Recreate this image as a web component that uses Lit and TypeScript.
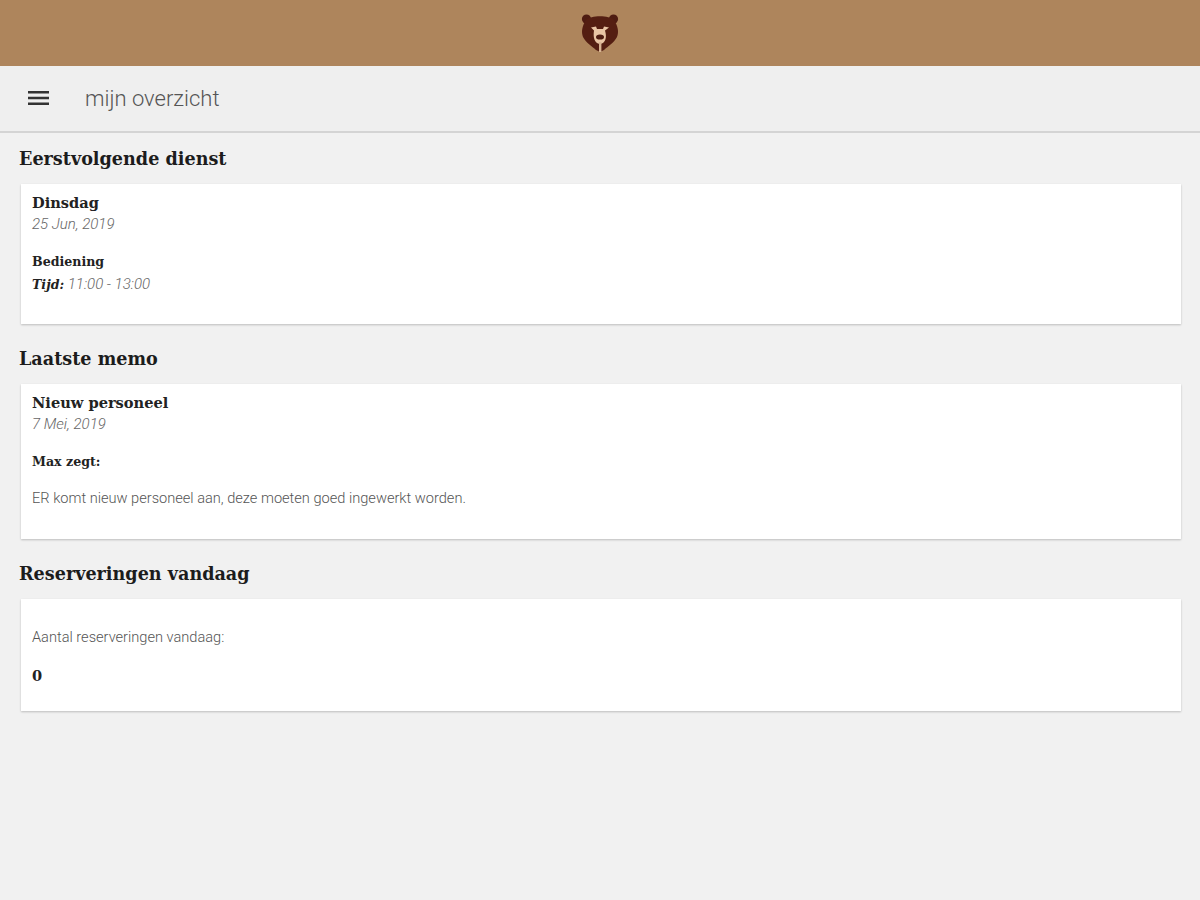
import { LitElement, html, css } from "lit";
import { customElement } from "lit/decorators.js";

@customElement("app-root")
export class AppRoot extends LitElement {
  static styles = css`
    :host { display: block; min-height: 900px; background: #f1f1f1; font-family: Roboto, sans-serif; color: #333; }
    .brand { height: 66px; background: #ae855c; display: flex; align-items: center; justify-content: center; }
    .brand svg { width: 42px; height: 42px; display: block; }
    .bar { height: 65px; background: #efefef; border-bottom: 2px solid #d4d4d4; display: flex; align-items: center; padding-left: 28px; gap: 36px; box-sizing: content-box; }
    .menu { width: 21px; height: 14px; display: block; margin-top: -2px; }
    .title { font-size: 22px; font-weight: 300; color: #555; margin-top: -1px; }
    main { padding: 14px 19px 0 19px; }
    h2 { font-family: "DejaVu Serif", serif; font-weight: 700; font-size: 17.6px; line-height: 24px; color: #1c1c1c; margin: 0; }
    .card { background: #fff; margin: 13px 0 23px 2px; padding: 9px 11px 0 11px; box-sizing: border-box; box-shadow: 0 1px 2px rgba(0,0,0,.22); }
    .c1 { height: 140px; }
    .c2 { height: 155px; }
    .c3 { height: 112px; padding-top: 28px; }
    .name { font-family: "DejaVu Serif", serif; font-weight: 700; font-size: 14.6px; line-height: 20px; color: #222; }
    .date { font-size: 15px; font-style: italic; font-weight: 300; color: #666; line-height: 22px; }
    .sub { font-family: "DejaVu Serif", serif; font-weight: 700; font-size: 12.6px; line-height: 20px; color: #222; margin-top: 17px; }
    .time { font-size: 15px; font-style: italic; font-weight: 300; color: #666; line-height: 22px; margin-top: 1px; }
    .time b { font-family: "DejaVu Serif", serif; font-size: 12.6px; font-weight: 700; color: #222; }
    .c2 .sub { margin-top: 17px; }
    .text { font-size: 14.6px; font-weight: 300; color: #555; line-height: 20px; margin-top: 16px; }
    .c3 .text { margin-top: 0; }
    .zero { font-family: "DejaVu Serif", serif; font-weight: 700; font-size: 14.6px; line-height: 20px; color: #222; margin-top: 19px; }
  `;

  render() {
    return html`
      <div class="brand">
        <svg viewBox="0 0 42 42">
          <circle cx="7.5" cy="7" r="4.6" fill="#4e1c12"/>
          <circle cx="34.5" cy="7" r="4.6" fill="#4e1c12"/>
          <path d="M7 8 C12 3 30 3 35 8 C39 14 40 20 38 25 C35 31 29 34 25 38 L21 40 L17 38 C13 34 7 31 4 25 C2 20 3 14 7 8Z" fill="#541e12"/>
          <path d="M12 15.5 l5 -1 l1 2.5 h6 l1 -2.5 l5 1 l-4 3 C28 25 27 31 21 32 C15 31 14 25 15 18.5Z" fill="#e8c4a4"/>
          <ellipse cx="21" cy="25" rx="4" ry="2.6" fill="#4e1c12"/>
          <rect x="20" y="30" width="2.4" height="10" fill="#d8b494"/>
        </svg>
      </div>
      <header class="bar">
        <svg class="menu" viewBox="0 0 21 14"><path d="M0 0h21v2.4H0zM0 5.8h21v2.4H0zM0 11.6h21V14H0z" fill="#333"/></svg>
        <div class="title">mijn overzicht</div>
      </header>
      <main>
        <h2>Eerstvolgende dienst</h2>
        <section class="card c1">
          <div class="name">Dinsdag</div>
          <div class="date">25 Jun, 2019</div>
          <div class="sub">Bediening</div>
          <div class="time"><b>Tijd:</b> 11:00 - 13:00</div>
        </section>
        <h2>Laatste memo</h2>
        <section class="card c2">
          <div class="name">Nieuw personeel</div>
          <div class="date">7 Mei, 2019</div>
          <div class="sub">Max zegt:</div>
          <div class="text">ER komt nieuw personeel aan, deze moeten goed ingewerkt worden.</div>
        </section>
        <h2>Reserveringen vandaag</h2>
        <section class="card c3">
          <div class="text">Aantal reserveringen vandaag:</div>
          <div class="zero">0</div>
        </section>
      </main>
    `;
  }
}
